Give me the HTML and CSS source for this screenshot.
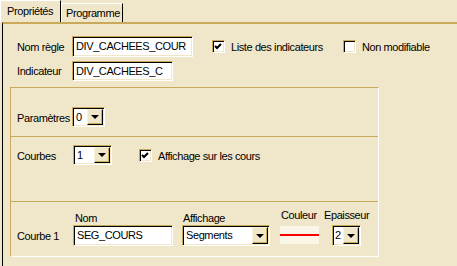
FILE: index.html
```html
<!DOCTYPE html>
<html lang="fr">
<head>
  <meta charset="UTF-8">
  <title>Propriétés</title>
  <link rel="stylesheet" href="styles.css">
</head>
<body>
  <div class="tabs">
    <div class="tab active">Propriétés</div>
    <div class="tab">Programme</div>
  </div>

  <div class="page">
    <div class="head">
      <div class="row">
        <span class="lbl">Nom règle</span>
        <div class="field name">DIV_CACHEES_COUR</div>
        <span class="check on first"><svg width="9" height="9" viewBox="0 0 9 9"><polyline points="1,4 3,6 7,2" /></svg></span>
        <span class="ctext">Liste des indicateurs</span>
        <span class="check second"></span>
        <span class="ctext">Non modifiable</span>
      </div>
      <div class="row">
        <span class="lbl">Indicateur</span>
        <div class="field ind">DIV_CACHEES_C</div>
      </div>
    </div>

    <div class="group">
      <div class="sect params">
        <span class="lbl">Paramètres</span>
        <div class="combo w33"><span class="val">0</span><span class="btn"><i></i></span></div>
      </div>

      <div class="sect curves">
        <span class="lbl">Courbes</span>
        <div class="combo w39"><span class="val">1</span><span class="btn"><i></i></span></div>
        <span class="check on cours"><svg width="9" height="9" viewBox="0 0 9 9"><polyline points="1,4 3,6 7,2" /></svg></span>
        <span class="ctext">Affichage sur les cours</span>
      </div>

      <div class="sect curve">
        <div class="cols heads">
          <span></span>
          <span class="h-nom">Nom</span>
          <span class="h-aff">Affichage</span>
          <span class="h-col">Couleur</span>
          <span class="h-ep">Epaisseur</span>
        </div>
        <div class="cols">
          <span class="lbl">Courbe 1</span>
          <div class="field seg">SEG_COURS</div>
          <div class="combo aff"><span class="val">Segments</span><span class="btn"><i></i></span></div>
          <div class="swatch"><b></b></div>
          <div class="combo ep"><span class="val">2</span><span class="btn"><i></i></span></div>
        </div>
      </div>
    </div>
  </div>
</body>
</html>
```

FILE: styles.css
```css
body {
  margin: 0;
  width: 457px;
  height: 266px;
  overflow: hidden;
  background-color: #f0e7ca;
  font-family: "Liberation Sans", Arial, sans-serif;
  font-size: 11px;
  letter-spacing: -0.4px;
  color: #000;
}

/* tab strip */
.tabs {
  display: flex;
  align-items: flex-end;
  height: 22px;
}
.tab {
  box-sizing: border-box;
  height: 19px;
  padding: 3px 0 0 4px;
  width: 62px;
  border-left: 1px solid #fff;
  border-right: 1px solid #000;
  border-top: 1px solid #fff;
}
.tab.active {
  height: 22px;
  width: 61px;
  padding: 4px 0 0 6px;
  border-left: 1px solid #fff;
}

.page {
  box-sizing: border-box;
  height: 244px;
  margin-left: 2px;
  border-left: 1px solid #000;
  border-top: 2px solid #c9a95a;
}

/* top fields */
.head {
  padding: 12px 0 0 14px;
}
.row {
  display: flex;
  align-items: center;
  height: 21px;
  margin-bottom: 3px;
}
.lbl {
  width: 55px;
  flex: none;
}

.field {
  box-sizing: border-box;
  height: 21px;
  padding: 3px 0 0 3px;
  background-color: #fff;
  border: 1px solid;
  border-color: #c9a95a #fff #fff #c9a95a;
  box-shadow: inset 1px 1px #000, inset -1px -1px #f0e7ca;
  white-space: nowrap;
  overflow: hidden;
}
.field.name { width: 121px; }
.field.ind { width: 101px; height: 20px; }

.check {
  box-sizing: border-box;
  display: flex;
  align-items: center;
  justify-content: center;
  width: 13px;
  height: 13px;
  flex: none;
  background-color: #fff;
  border: 1px solid;
  border-color: #c9a95a #fff #fff #c9a95a;
  box-shadow: inset 1px 1px #000, inset -1px -1px #f0e7ca;
}
.check svg polyline {
  fill: none;
  stroke: #000;
  stroke-width: 2;
}
.check.first { margin-left: 19px; }
.check.second { margin-left: 20px; }
.check.cours { margin-left: 27px; margin-top: 4px; }
.ctext { margin-left: 6px; }

/* inner group */
.group {
  box-sizing: border-box;
  width: 369px;
  height: 170px;
  margin: 6px 0 0 7px;
  border: 1px solid;
  border-color: #c9a95a #fff #fff #c9a95a;
}
.sect {
  display: flex;
  align-items: center;
  padding-left: 6px;
  border-bottom: 1px solid #c9a95a;
}
.sect.params {
  height: 49px;
  align-items: flex-start;
  padding-top: 19px;
  box-sizing: border-box;
}
.sect.params .lbl { padding-top: 5px; }
.sect.curves {
  height: 65px;
  align-items: flex-start;
  padding-top: 8px;
  box-sizing: border-box;
}
.sect.curves .lbl { padding-top: 5px; width: 56px; }
.sect.curves .ctext { padding-top: 5px; }
.sect.curve {
  display: block;
  border-bottom: none;
  padding-top: 6px;
}

.combo {
  box-sizing: border-box;
  display: flex;
  height: 20px;
  background-color: #fff;
  border: 1px solid;
  border-color: #c9a95a #fff #fff #c9a95a;
  box-shadow: inset 1px 1px #000, inset -1px -1px #f0e7ca;
  padding: 1px 1px 1px 1px;
}
.combo.w33 { width: 33px; }
.combo.w39 { width: 39px; }
.combo .val {
  flex: 1;
  padding: 2px 0 0 2px;
  white-space: nowrap;
  overflow: hidden;
}
.combo .btn {
  box-sizing: border-box;
  display: flex;
  align-items: center;
  justify-content: center;
  width: 16px;
  background-color: #f0e7ca;
  border: 1px solid;
  border-color: #f8f2dc #000 #000 #f8f2dc;
  box-shadow: inset -1px -1px #c9a95a;
}
.combo .btn i {
  width: 0;
  height: 0;
  border-left: 4px solid transparent;
  border-right: 4px solid transparent;
  border-top: 4px solid #000;
}

/* curve grid */
.cols {
  display: grid;
  grid-template-columns: 46px 100px 87px 39px 29px;
  column-gap: 10px;
  align-items: center;
}
.cols .lbl { width: auto; white-space: nowrap; }
.heads {
  height: 17px;
  align-items: end;
}
.heads span { line-height: 13px; }
.h-nom { padding-left: 2px; }
.h-aff { margin-left: 0; }
.h-col { margin-left: 1px; margin-bottom: 3px; }
.h-ep { margin-left: -5px; margin-bottom: 3px; white-space: nowrap; }
.cols .field.seg { height: 21px; }
.cols .combo { height: 21px; }
.cols .combo.aff { margin-left: -1px; }
.swatch {
  height: 18px;
  background-color: #faf6e8;
  display: flex;
  align-items: center;
  margin-top: -2px;
}
.swatch b {
  display: block;
  width: 100%;
  height: 2px;
  background-color: #f00;
}
.cols .combo.ep { margin-left: 3px; width: 29px; }
.cols .combo.ep .val { padding-left: 1px; }
```
